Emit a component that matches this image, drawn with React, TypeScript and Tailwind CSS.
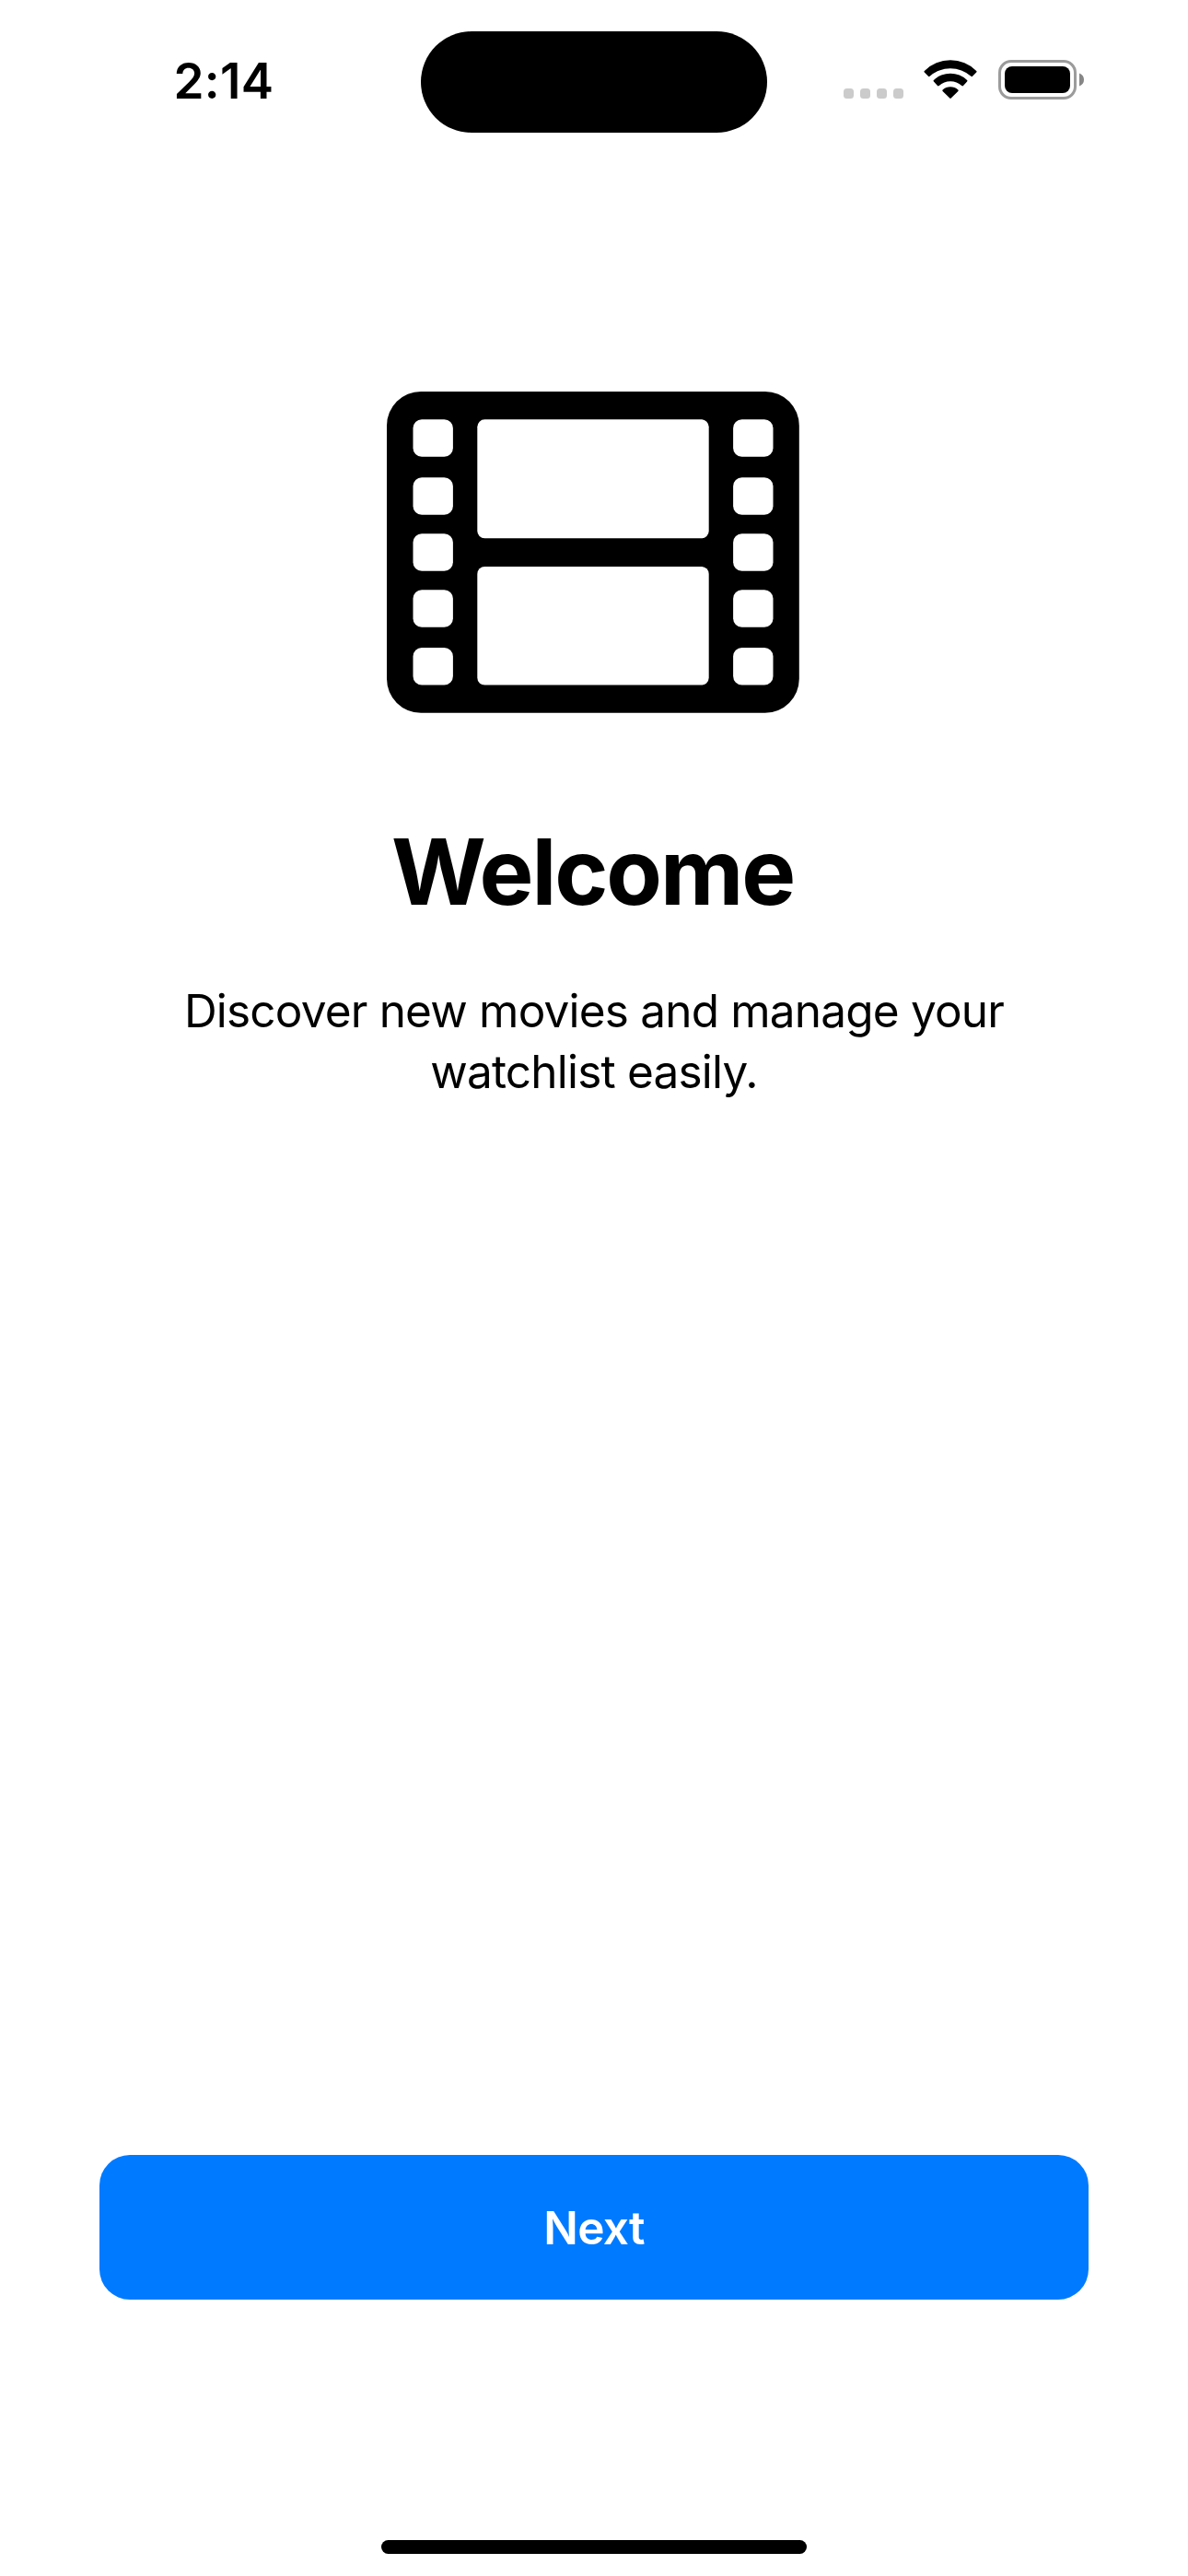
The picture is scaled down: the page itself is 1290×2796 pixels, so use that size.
const holeRows = [30.3, 93.3, 154.3, 215.3, 278];

function CellularDots() {
  return (
    <div className="flex gap-[7px] pb-px">
      {[0, 1, 2, 3].map((dot) => (
        <span key={dot} className="size-[11px] rounded-[3.5px] bg-[#cbcbcb]" />
      ))}
    </div>
  );
}

function WifiIcon() {
  return (
    <svg viewBox="0 0 58 43" className="h-[43px] w-[58px]" fill="#000">
      <path d="M.8 13.4Q-.1 12.7.8 11.9A40 40 0 0 1 57.2 11.9Q58.1 12.7 57.2 13.4L53 17.8Q52.3 18.6 51.4 17.8A33.5 33.5 0 0 0 6.6 17.8Q5.7 18.6 5 17.8Z" />
      <path d="M10.9 23.4Q10.2 22.7 10.9 22A26 26 0 0 1 47.1 22Q47.8 22.7 47.1 23.4L43 28Q42.2 28.9 41.3 28A18.4 18.4 0 0 0 16.7 28Q15.8 28.9 15 28Z" />
      <path d="M20.6 33.9Q19.9 33.2 20.6 32.5A12.4 12.4 0 0 1 37.4 32.5Q38.1 33.2 37.4 33.9L29.7 41.6Q29 42.3 28.3 41.6Z" />
    </svg>
  );
}

function BatteryIcon() {
  return (
    <svg viewBox="0 0 94 43" className="h-[43px] w-[94px]">
      <rect x="1.5" y="1.5" width="82" height="40" rx="12.5" fill="none" stroke="#9b9b9b" strokeWidth="3" />
      <rect x="7" y="7" width="71" height="29" rx="8" fill="#000" />
      <path d="M88 14.5Q93 16.5 93 21.5T88 28.5Z" fill="#868686" />
    </svg>
  );
}

function StatusBar() {
  return (
    <header className="flex h-[178px] w-full items-start">
      <div className="flex w-[457px] pt-[56px] pl-[188.5px]">
        <span className="text-[53px] leading-[64px] font-semibold tracking-[0.3px]">2:14</span>
      </div>
      <div className="mt-[34px] h-[110px] w-[376px] rounded-full bg-black" />
      <div className="flex flex-1 items-end pt-[65px] pl-[83px]">
        <CellularDots />
        <div className="ml-[22px]">
          <WifiIcon />
        </div>
        <div className="ml-[23px]">
          <BatteryIcon />
        </div>
      </div>
    </header>
  );
}

function FilmIcon() {
  return (
    <svg viewBox="0 0 448 349" className="h-[349px] w-[448px]">
      <rect width="447.8" height="348.8" rx="37" fill="#000" />
      <g fill="#fff">
        <rect x="98.3" y="30.3" width="251.4" height="129" rx="8" />
        <rect x="98.3" y="190" width="251.4" height="128.5" rx="8" />
        {holeRows.map((y) => (
          <g key={y}>
            <rect x="28.5" y={y} width="43.4" height="40.5" rx="9.5" />
            <rect x="376.1" y={y} width="43.4" height="40.5" rx="9.5" />
          </g>
        ))}
      </g>
    </svg>
  );
}

export default function App() {
  return (
    <div className="flex h-[2796px] w-[1290px] flex-col items-center bg-white font-['Inter',sans-serif] text-black">
      <StatusBar />
      <main className="flex w-full flex-1 flex-col items-center px-[108px] pt-[247px]">
        <div className="pr-[2px]">
          <FilmIcon />
        </div>
        <h1 className="mt-[112px] pr-[3px] text-[99px] leading-[120px] font-bold tracking-[-2.1px]">Welcome</h1>
        <p className="mt-[58px] text-center text-[49.5px] leading-[66px] tracking-[-0.81px]">
          Discover new movies and manage your
          <br />
          watchlist easily.
        </p>
        <button className="mt-auto mb-[261px] flex h-[157px] w-full items-center justify-center rounded-[33px] bg-[#007aff] pt-px text-[49.5px] font-semibold tracking-[-0.7px] text-white">
          Next
        </button>
      </main>
      <div className="mb-[24px] h-[15px] w-[462px] rounded-full bg-black" />
    </div>
  );
}
